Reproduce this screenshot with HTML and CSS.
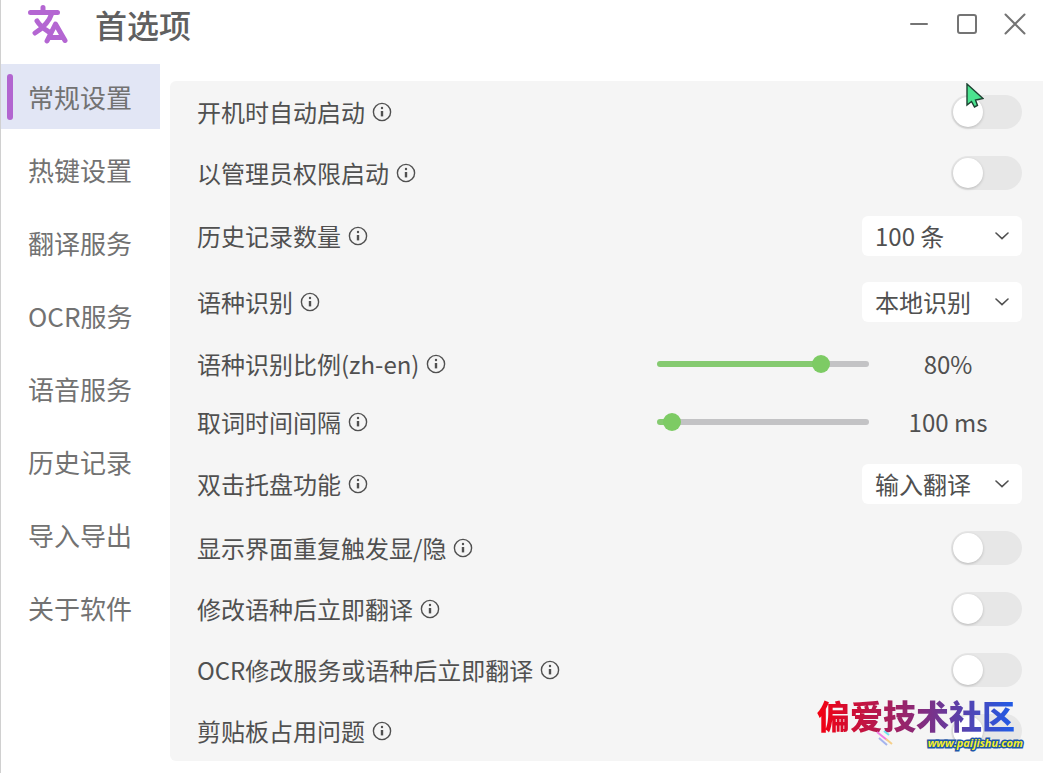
FILE: index.html
```html
<!DOCTYPE html>
<html lang="zh-CN">
<head>
  <meta charset="UTF-8">
  <title>首选项</title>
  <link rel="stylesheet" href="styles.css">
</head>
<body>
  <svg class="sprite" aria-hidden="true">
    <symbol id="info" viewBox="0 0 20 20">
      <circle cx="10" cy="10" r="8.6" fill="none" stroke="currentColor" stroke-width="1.4"/>
      <circle cx="10" cy="6" r="1.2" fill="currentColor"/>
      <path d="M10 9v5.4" stroke="currentColor" stroke-width="2.4"/>
    </symbol>
    <symbol id="chevron" viewBox="0 0 14 8">
      <path d="M1 1l6 5.6L13 1" fill="none" stroke="currentColor" stroke-width="1.6" stroke-linecap="round"/>
    </symbol>
  </svg>

  <header class="titlebar">
    <svg class="logo" viewBox="0 0 42 40" aria-hidden="true">
      <path d="M4.500 8.500h27M17 3.500v5M26 9C23 18 17 24 9 29M11 17c3 5 7 8 12 11M21 37l8.500-17 9.500 16.500M24 33.500h12" />
    </svg>
    <h1 class="title">首选项</h1>
    <div class="window-buttons">
      <button class="window-button" aria-label="最小化"><svg viewBox="0 0 22 22"><path d="M3 11h16"/></svg></button>
      <button class="window-button" aria-label="最大化"><svg viewBox="0 0 22 22"><rect x="2" y="2" width="18" height="18" rx="2"/></svg></button>
      <button class="window-button" aria-label="关闭"><svg viewBox="0 0 22 22"><path d="M1.500 1.500l19 19M20.500 1.500l-19 19"/></svg></button>
    </div>
  </header>

  <div class="layout">
    <nav class="sidebar">
      <a class="nav-item active" href="#general">常规设置</a>
      <a class="nav-item" href="#hotkey">热键设置</a>
      <a class="nav-item" href="#translate">翻译服务</a>
      <a class="nav-item" href="#ocr">OCR服务</a>
      <a class="nav-item" href="#tts">语音服务</a>
      <a class="nav-item" href="#history">历史记录</a>
      <a class="nav-item" href="#backup">导入导出</a>
      <a class="nav-item" href="#about">关于软件</a>
    </nav>

    <main class="panel" id="general">
      <div class="row">
        <label class="label" for="autostart">开机时自动启动<svg class="info"><use href="#info"/></svg></label>
        <span class="switch-wrap">
          <input class="switch" type="checkbox" id="autostart">
          <svg class="cursor" viewBox="0 0 18 25" aria-hidden="true">
            <path d="M1 1v21l4.500-3.500 3 5.500 3-1.500-2-5.500 7.500-1.500z" fill="#4be38f" stroke="#1c4030" stroke-width="1.4"/>
          </svg>
        </span>
      </div>
      <div class="row">
        <label class="label" for="admin">以管理员权限启动<svg class="info"><use href="#info"/></svg></label>
        <input class="switch" type="checkbox" id="admin">
      </div>
      <div class="row row-select">
        <label class="label" for="count">历史记录数量<svg class="info"><use href="#info"/></svg></label>
        <span class="select-wrap">
          <select class="select" id="count"><option>100 条</option></select>
          <svg class="chevron"><use href="#chevron"/></svg>
        </span>
      </div>
      <div class="row row-select">
        <label class="label" for="detect">语种识别<svg class="info"><use href="#info"/></svg></label>
        <span class="select-wrap">
          <select class="select" id="detect"><option>本地识别</option></select>
          <svg class="chevron"><use href="#chevron"/></svg>
        </span>
      </div>
      <div class="row row-slider">
        <label class="label" for="ratio">语种识别比例(zh-en)<svg class="info"><use href="#info"/></svg></label>
        <input class="slider" type="range" id="ratio" min="0" max="100" value="80" style="--fill: 80%">
        <output class="value" for="ratio">80%</output>
      </div>
      <div class="row row-slider">
        <label class="label" for="interval">取词时间间隔<svg class="info"><use href="#info"/></svg></label>
        <input class="slider" type="range" id="interval" min="0" max="3000" value="100" style="--fill: 4%">
        <output class="value" for="interval">100 ms</output>
      </div>
      <div class="row row-select">
        <label class="label" for="tray">双击托盘功能<svg class="info"><use href="#info"/></svg></label>
        <span class="select-wrap">
          <select class="select" id="tray"><option>输入翻译</option></select>
          <svg class="chevron"><use href="#chevron"/></svg>
        </span>
      </div>
      <div class="row">
        <label class="label" for="toggle">显示界面重复触发显/隐<svg class="info"><use href="#info"/></svg></label>
        <input class="switch" type="checkbox" id="toggle">
      </div>
      <div class="row">
        <label class="label" for="instant">修改语种后立即翻译<svg class="info"><use href="#info"/></svg></label>
        <input class="switch" type="checkbox" id="instant">
      </div>
      <div class="row">
        <label class="label" for="ocr-instant">OCR修改服务或语种后立即翻译<svg class="info"><use href="#info"/></svg></label>
        <input class="switch" type="checkbox" id="ocr-instant">
      </div>
      <div class="row">
        <label class="label" for="clipboard">剪贴板占用问题<svg class="info"><use href="#info"/></svg></label>
        <input class="switch" type="checkbox" id="clipboard">
      </div>

      <div class="watermark">
        <span class="watermark-name">偏爱技术社区</span>
        <svg class="streaks" viewBox="0 0 18 18" aria-hidden="true">
          <path d="M1 3l10 8" stroke="#f07be0"/>
          <path d="M8 2l5 4" stroke="#6fe3ee"/>
          <path d="M3 9l8 7" stroke="#a5b4ee"/>
          <path d="M10 10l6 5" stroke="#f5cf8a"/>
        </svg>
        <span class="watermark-url">www.paijishu.com</span>
      </div>
    </main>
  </div>
</body>
</html>
```
FILE: styles.css
```css
* {
  margin: 0;
  padding: 0;
  box-sizing: border-box;
}

body {
  min-height: 100vh;
  font-family: "Noto Sans CJK SC", sans-serif;
  font-size: 24px;
  font-weight: 400;
  line-height: 32px;
  background: #ffffff;
  color: #505050;
  border-left: 1px solid #d0d0d0;
}

button,
select {
  font: inherit;
  color: inherit;
  border: 0;
  background: none;
}

.sprite {
  display: none;
}

/* Title bar */
.titlebar {
  display: flex;
  align-items: center;
  height: 64px;
  padding: 0 17px 16px 25px;
}

.logo {
  width: 42px;
  height: 40px;
  fill: none;
  stroke: #b466d2;
  stroke-width: 5;
  stroke-linecap: round;
  stroke-linejoin: round;
}

.title {
  margin-left: 27px;
  font-size: 32px;
  font-weight: 500;
  color: #606060;
}

.window-buttons {
  display: flex;
  gap: 26px;
  margin-left: auto;
}

.window-button {
  width: 22px;
  height: 22px;
}

.window-button svg {
  display: block;
  fill: none;
  stroke: #747474;
  stroke-width: 2;
  stroke-linecap: round;
}

.layout {
  display: flex;
  align-items: flex-start;
  gap: 10px;
}

/* Sidebar */
.sidebar {
  display: flex;
  flex-direction: column;
  flex: none;
  gap: 8px;
  width: 159px;
}

.nav-item {
  display: flex;
  align-items: center;
  height: 65px;
  padding-left: 27px;
  font-size: 26px;
  color: #727272;
  text-decoration: none;
}

.nav-item.active {
  gap: 15px;
  padding-left: 6px;
  background: #e2e6f5;
}

.nav-item.active::before {
  content: "";
  width: 6px;
  height: 46px;
  border-radius: 3px;
  background: #b265d0;
}

/* Settings */
.panel {
  position: relative;
  flex: 1;
  margin-top: 17px;
  border-radius: 6px 0 0 6px;
  background: #f5f5f5;
}

.row {
  display: flex;
  align-items: center;
  height: 61px;
  padding: 0 21px 0 27px;
}

.row-select {
  height: 66px;
}

.row-slider {
  height: 58px;
}

.label {
  display: flex;
  align-items: center;
  gap: 7px;
  margin-right: auto;
}

.info {
  width: 20px;
  height: 20px;
}

.switch-wrap {
  display: flex;
  position: relative;
}

.switch {
  appearance: none;
  width: 71px;
  height: 34px;
  padding: 2px;
  border-radius: 17px;
  background: #e7e7e7;
}

.switch::before {
  content: "";
  display: block;
  width: 30px;
  height: 30px;
  border-radius: 50%;
  background: #ffffff;
  box-shadow: 0 1px 3px rgba(0, 0, 0, 0.2);
}

.switch:checked {
  background: #7dcb64;
}

.switch:checked::before {
  margin-left: auto;
}

.cursor {
  position: absolute;
  left: 15px;
  top: -12px;
  width: 18px;
  height: 25px;
}

.select-wrap {
  display: grid;
  align-items: center;
}

.select {
  grid-area: 1 / 1;
  appearance: none;
  width: 160px;
  height: 40px;
  padding-left: 13px;
  border-radius: 6px;
  background: #ffffff;
}

.chevron {
  grid-area: 1 / 1;
  justify-self: end;
  width: 14px;
  height: 8px;
  margin-right: 13px;
  pointer-events: none;
}

.slider {
  appearance: none;
  width: 212px;
  height: 20px;
  background: none;
}

.slider::-webkit-slider-runnable-track {
  height: 6px;
  border-radius: 3px;
  background: linear-gradient(to right, #85ca70 var(--fill), #c3c3c5 var(--fill));
}

.slider::-webkit-slider-thumb {
  appearance: none;
  width: 18px;
  height: 18px;
  margin-top: -6px;
  border-radius: 50%;
  background: #7dcb64;
}

.value {
  width: 148px;
  margin-left: 5px;
  text-align: center;
}

/* Watermark */
.watermark {
  position: absolute;
  right: 20px;
  bottom: 12px;
  display: grid;
  row-gap: 4px;
  justify-items: end;
  width: 206px;
}

.watermark-name {
  justify-self: start;
  font-size: 33px;
  font-weight: 900;
  line-height: 36px;
  white-space: nowrap;
  background: linear-gradient(to right, #f50010, #8a2a78 50%, #1f5ce8);
  background-clip: text;
  color: transparent;
}

.streaks {
  position: absolute;
  left: 59px;
  top: 32px;
  width: 18px;
  height: 18px;
  stroke-width: 2;
}

.watermark-url {
  font-family: "Open Sans", sans-serif;
  font-size: 11px;
  font-weight: 700;
  font-style: italic;
  line-height: 12px;
  color: #f4ef2b;
  -webkit-text-stroke: 3px #1d57a8;
  paint-order: stroke fill;
}
```
